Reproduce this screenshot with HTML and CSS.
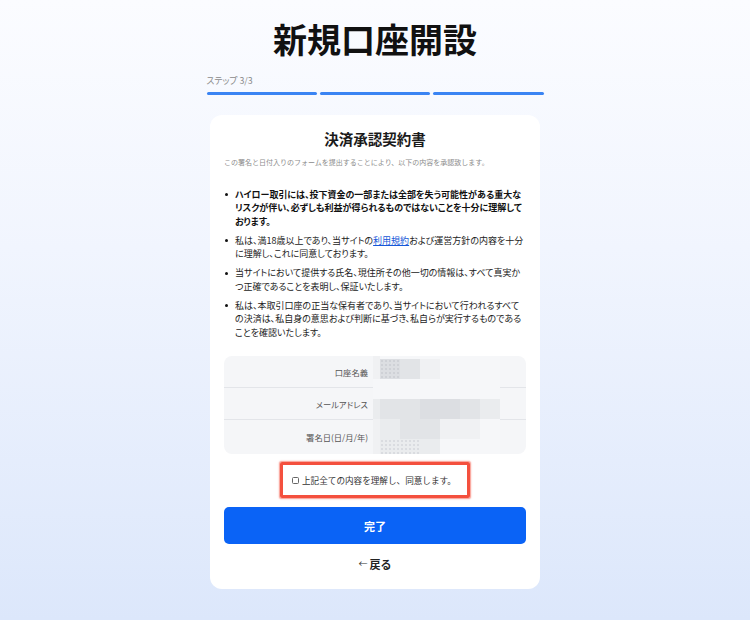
FILE: index.html
```html
<!DOCTYPE html>
<html lang="ja">
<head>
<meta charset="utf-8">
<title>新規口座開設</title>
<link rel="stylesheet" href="styles.css">
</head>
<body>
<main class="page">
  <h1 class="page-title">新規口座開設</h1>
  <div class="step">
    <div class="step-label">ステップ 3/3</div>
    <div class="step-bars">
      <span class="bar"></span><span class="bar"></span><span class="bar"></span>
    </div>
  </div>

  <section class="card">
    <h2 class="card-title">決済承認契約書</h2>
    <p class="card-lead">この署名と日付入りのフォームを提出することにより、以下の内容を承認致します。</p>

    <ul class="terms">
      <li class="strong">ハイロー取引には、投下資金の一部または全部を失う可能性がある重大なリスクが伴い、必ずしも利益が得られるものではないことを十分に理解しております。</li>
      <li>私は、満18歳以上であり、当サイトの<a href="#" class="link">利用規約</a>および運営方針の内容を十分に理解し、これに同意しております。</li>
      <li>当サイトにおいて提供する氏名、現住所その他一切の情報は、すべて真実かつ正確であることを表明し、保証いたします。</li>
      <li>私は、本取引口座の正当な保有者であり、当サイトにおいて行われるすべての決済は、私自身の意思および判断に基づき、私自らが実行するものであることを確認いたします。</li>
    </ul>

    <div class="info">
      <div class="info-row"><span class="info-label">口座名義</span><span class="info-value"></span></div>
      <div class="info-row"><span class="info-label">メールアドレス</span><span class="info-value"></span></div>
      <div class="info-row last"><span class="info-label">署名日(日/月/年)</span><span class="info-value"></span></div>
      <!-- masked personal values -->
      <div class="mosaic" aria-hidden="true">
        <i class="c1"></i><i class="c0"></i><i class="c0"></i><i class="c0"></i><i class="c0"></i><i class="c0"></i><i class="c0"></i>
        <i class="c1"></i><i class="c4 dots"></i><i class="c3"></i><i class="c1"></i><i class="c0"></i><i class="c0"></i><i class="c0"></i>
        <i class="c0"></i><i class="c0"></i><i class="c0"></i><i class="c0"></i><i class="c0"></i><i class="c0"></i><i class="c0"></i>
        <i class="c2"></i><i class="c3"></i><i class="c3"></i><i class="c4"></i><i class="c4"></i><i class="c3"></i><i class="c2"></i>
        <i class="c1"></i><i class="c2"></i><i class="c3"></i><i class="c3"></i><i class="c1"></i><i class="c1"></i><i class="c0"></i>
        <i class="c1"></i><i class="c2 dots"></i><i class="c2 dots"></i><i class="c2"></i><i class="c0"></i><i class="c0"></i><i class="c0"></i>
      </div>
    </div>

    <label class="agree">
      <input type="checkbox" class="agree-box">
      <span>上記全ての内容を理解し、同意します。</span>
    </label>

    <button class="submit" type="button">完了</button>
    <a href="#" class="back"><span class="arrow">←</span>戻る</a>
  </section>
</main>
</body>
</html>
```

FILE: styles.css
```css
* { box-sizing: border-box; }

html, body { margin: 0; }

body {
  min-height: 620px;
  background: linear-gradient(180deg, #fbfcff 0%, #f1f5fe 40%, #dce7fb 100%);
  font-family: "Noto Sans CJK JP", "Noto Sans", sans-serif;
  color: #1b1b1b;
}

.page {
  width: 337px;
  margin: 0 auto;
  padding: 19px 0 30px;
}

.page-title {
  margin: 0;
  font-size: 34px;
  line-height: 40px;
  font-weight: 700;
  text-align: center;
  color: #111;
}

.step { margin-top: 16px; }

.step-label {
  font-size: 8.8px;
  line-height: 12px;
  color: #8a8a8a;
  font-feature-settings: "palt";
}

.step-bars {
  display: grid;
  grid-template-columns: repeat(3, 1fr);
  gap: 3px;
  margin-top: 5px;
}

.bar {
  height: 2.5px;
  border-radius: 2px;
  background: #3a84f3;
}

.card {
  width: 330px;
  margin: 20px auto 0;
  padding: 14px 14px 18px;
  background: #fff;
  border-radius: 12px;
  display: flex;
  flex-direction: column;
}

.card-title {
  margin: 0;
  font-size: 14.5px;
  line-height: 20px;
  font-weight: 700;
  text-align: center;
  color: #1a1a1a;
}

.card-lead {
  margin: 8px 0 0;
  font-size: 7px;
  line-height: 10px;
  color: #8c8c8c;
}

.terms {
  list-style: none;
  margin: 21px 0 0;
  padding: 0 0 0 11px;
  font-size: 9px;
  line-height: 13.5px;
  color: #222;
  font-feature-settings: "palt";
}

.terms li {
  position: relative;
  margin-bottom: 5.5px;
}

.terms li:last-child { margin-bottom: 0; }

.terms li::before {
  content: "";
  position: absolute;
  left: -10px;
  top: 5.5px;
  width: 3px;
  height: 3px;
  border-radius: 50%;
  background: #111;
}

.terms li.strong { font-weight: 700; color: #111; }

.link {
  color: #1557d8;
  text-decoration: underline;
}

.info {
  position: relative;
  margin-top: 17px;
  background: #f5f6f8;
  border-radius: 8px;
  overflow: hidden;
}

.info-row {
  display: grid;
  grid-template-columns: 144px 1fr;
  align-items: center;
  height: 32px;
  border-bottom: 1px solid #e3e5e9;
}

.info-row.last {
  height: 34px;
  border-bottom: 0;
}

.info-label {
  text-align: right;
  font-size: 8.3px;
  color: #555;
  font-feature-settings: "palt";
}

/* pixelated cover over the filled-in values */
.mosaic {
  position: absolute;
  left: 149px;
  top: 0;
  width: 127px;
  height: 98px;
  display: grid;
  grid-template-columns: 7px repeat(6, 20px);
  grid-template-rows: 3px 20px 20px 20px 20px 15px;
  background: #f6f7f9;
}

.mosaic i { display: block; }
.mosaic .c0 { background: #f6f7f9; }
.mosaic .c1 { background: #f0f1f3; }
.mosaic .c2 { background: #eaecee; }
.mosaic .c3 { background: #e2e4e7; }
.mosaic .c4 { background: #dcdee2; }
.mosaic .dots {
  background-image: radial-gradient(rgba(160, 165, 175, 0.35) 0.6px, transparent 0.9px);
  background-size: 4px 4px;
}

.agree {
  align-self: center;
  margin-top: 8px;
  width: 190px;
  height: 36px;
  display: flex;
  align-items: center;
  gap: 3px;
  padding-left: 9px;
  border: 3px solid #f4503e;
  box-shadow: 0 0 1.5px 0.5px rgba(244, 80, 62, 0.6);
  border-radius: 2px;
  font-size: 8.6px;
  color: #333;
  cursor: pointer;
}

.agree-box {
  appearance: none;
  -webkit-appearance: none;
  margin: 0;
  width: 7px;
  height: 7px;
  border: 1px solid #666;
  border-radius: 1.5px;
  background: #fff;
}

.submit {
  margin-top: 9px;
  height: 37px;
  border: 0;
  border-radius: 5px;
  background: #0a63f6;
  color: #fff;
  font-family: inherit;
  font-size: 11px;
  font-weight: 700;
  cursor: pointer;
}

.back {
  align-self: center;
  margin-top: 13px;
  font-size: 11px;
  line-height: 14px;
  font-weight: 700;
  color: #222;
  text-decoration: none;
  display: flex;
  align-items: center;
  gap: 2px;
}

.back .arrow {
  font-size: 9px;
  font-weight: 400;
  color: #333;
}
```
